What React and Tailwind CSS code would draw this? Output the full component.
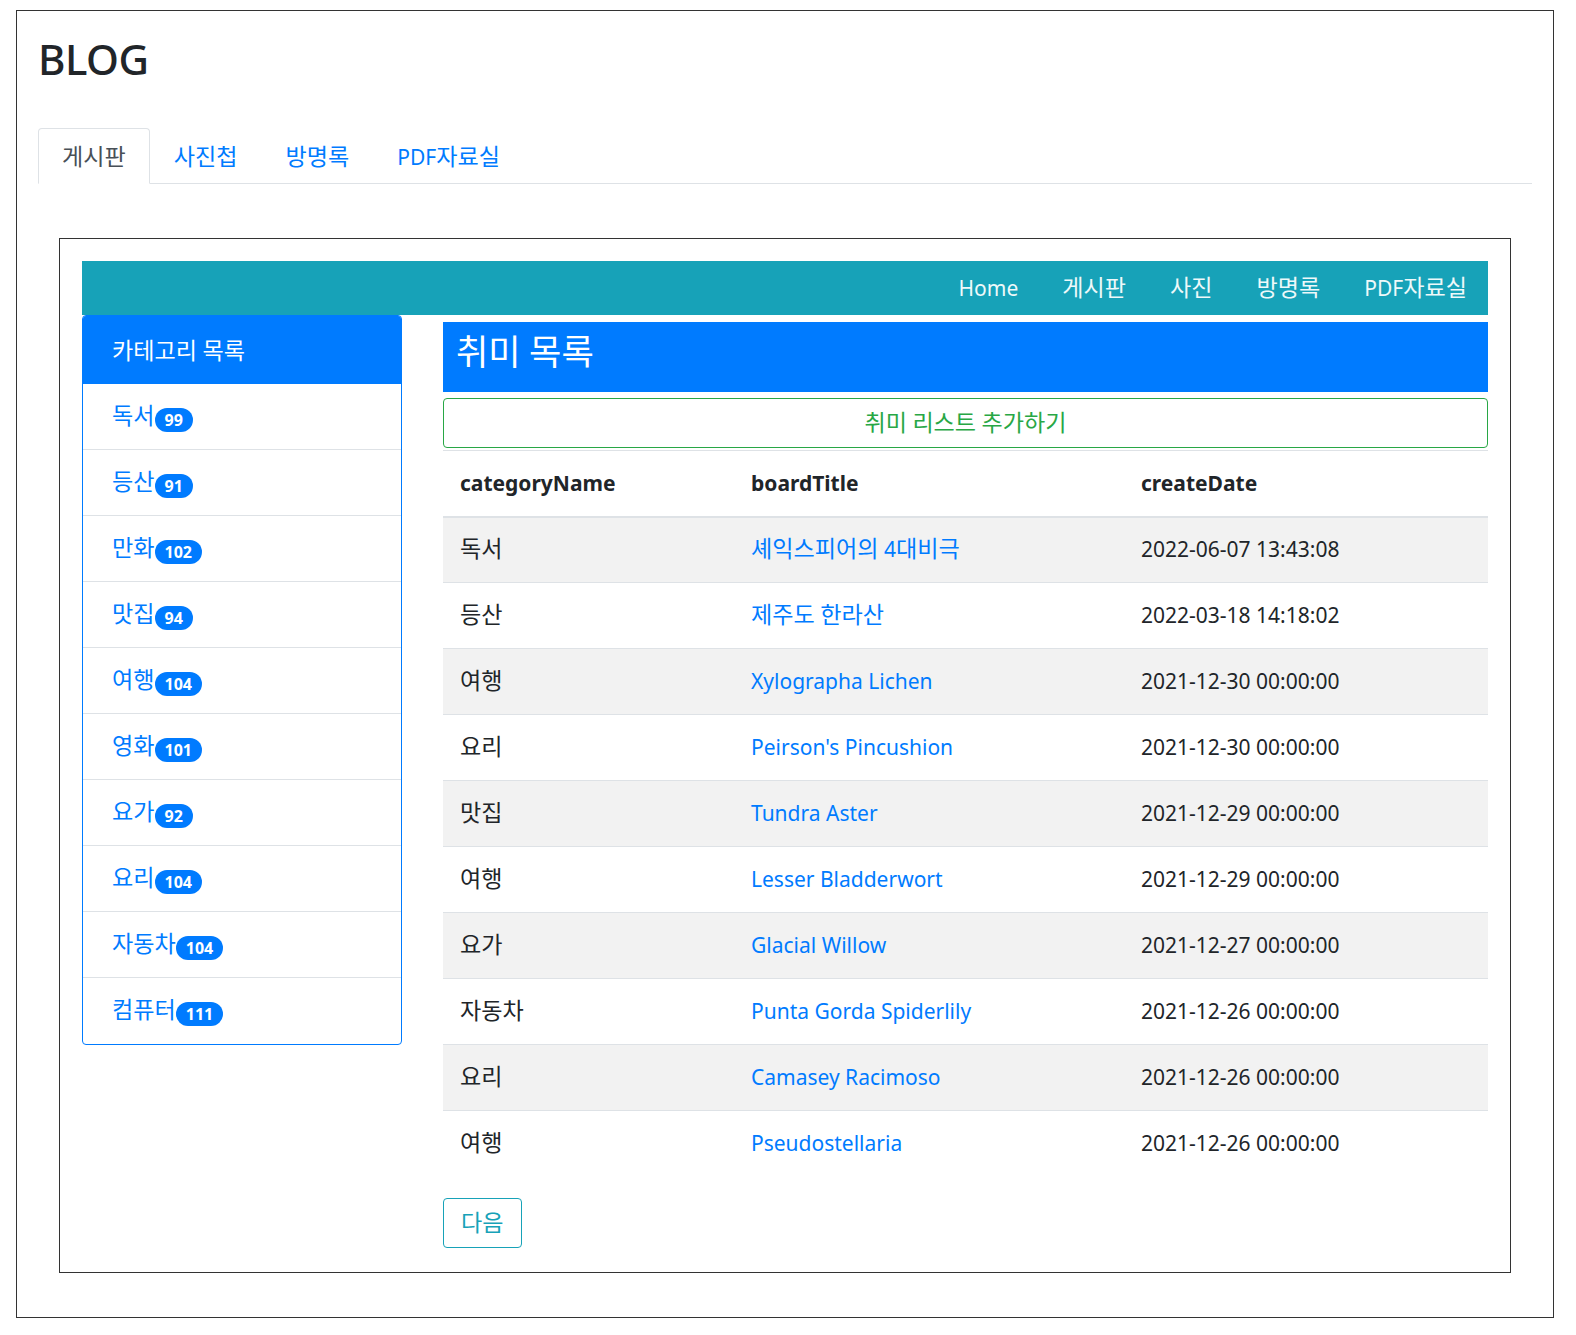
import React from "react";

const categories = [
    { name: "독서", count: 99 },
    { name: "등산", count: 91 },
    { name: "만화", count: 102 },
    { name: "맛집", count: 94 },
    { name: "여행", count: 104 },
    { name: "영화", count: 101 },
    { name: "요가", count: 92 },
    { name: "요리", count: 104 },
    { name: "자동차", count: 104 },
    { name: "컴퓨터", count: 111 },
];

const hobbies = [
    { categoryName: "독서", boardTitle: "셰익스피어의 4대비극", createDate: "2022-06-07 13:43:08" },
    { categoryName: "등산", boardTitle: "제주도 한라산", createDate: "2022-03-18 14:18:02" },
    { categoryName: "여행", boardTitle: "Xylographa Lichen", createDate: "2021-12-30 00:00:00" },
    { categoryName: "요리", boardTitle: "Peirson's Pincushion", createDate: "2021-12-30 00:00:00" },
    { categoryName: "맛집", boardTitle: "Tundra Aster", createDate: "2021-12-29 00:00:00" },
    { categoryName: "여행", boardTitle: "Lesser Bladderwort", createDate: "2021-12-29 00:00:00" },
    { categoryName: "요가", boardTitle: "Glacial Willow", createDate: "2021-12-27 00:00:00" },
    { categoryName: "자동차", boardTitle: "Punta Gorda Spiderlily", createDate: "2021-12-26 00:00:00" },
    { categoryName: "요리", boardTitle: "Camasey Racimoso", createDate: "2021-12-26 00:00:00" },
    { categoryName: "여행", boardTitle: "Pseudostellaria", createDate: "2021-12-26 00:00:00" },
];

const tabs = ["게시판", "사진첩", "방명록", "PDF자료실"];
const navLinks = ["Home", "게시판", "사진", "방명록", "PDF자료실"];

const K = ({ children }) => {
    const parts = String(children).split(/([\uAC00-\uD7A3]+)/);
    return parts.map((part, i) =>
        /[\uAC00-\uD7A3]/.test(part) ? (
            <span key={i} className="text-[1.1em] leading-none">{part}</span>
        ) : (
            part
        )
    );
};

const App = () => {
    return (
        <div
            className="min-h-[1335px] bg-white pt-[10px] pl-[16px] text-[#212529]"
            style={{ fontFamily: "'Noto Sans', 'Noto Sans CJK KR', sans-serif" }}
        >
            <div className="w-[1538px] border border-[#333] pt-[24px] px-[21px] pb-[44px]">
                <h1 className="text-[42px] font-medium leading-[48px] tracking-[-0.5px] text-[#212529]">BLOG</h1>

                {/* top tabs */}
                <ul className="mt-[45px] flex border-b border-[#dee2e6]">
                    {tabs.map((tab, i) => (
                        <li key={tab} className="-mb-px">
                            <a
                                className={`flex h-[56px] items-center pt-[3px] px-[23px] text-[21px] rounded-t-[4px] border ${i === 0
                                    ? "border-[#dee2e6] border-b-white bg-white text-[#495057]"
                                    : "border-transparent text-[#007bff]"
                                    }`}
                            >
                                <span><K>{tab}</K></span>
                            </a>
                        </li>
                    ))}
                </ul>

                <div className="mx-[21px] mt-[54px] border border-[#333] p-[22px] pb-[24px]">
                    {/* navbar */}
                    <nav className="flex h-[54px] items-center justify-end gap-[44px] bg-[#17a2b8] pt-[2px] pr-[21px] text-[21px] text-[#eef9fa]">
                        {navLinks.map((link) => (
                            <a key={link}><K>{link}</K></a>
                        ))}
                    </nav>

                    <div className="flex gap-[41px]">
                        {/* category sidebar */}
                        <div className="w-[320px] self-start overflow-hidden rounded-[4px] border border-[#007bff]">
                            <div className="flex h-[68px] items-center bg-[#007bff] pt-[3px] pl-[29px] text-[21px] text-white">
                                <span><K>카테고리 목록</K></span>
                            </div>
                            <div className="divide-y divide-[#dee2e6]">
                                {categories.map((c) => (
                                    <div key={c.name} className="flex h-[66px] items-center pl-[29px] text-[21px] text-[#007bff]">
                                        <span><K>{c.name}</K></span>
                                        <span className="mt-[6px] inline-block rounded-full bg-[#007bff] px-[10px] py-[4px] text-[16px] font-bold leading-none text-white">
                                            {c.count}
                                        </span>
                                    </div>
                                ))}
                            </div>
                        </div>

                        {/* hobby list */}
                        <div className="flex-1 pt-[7px]">
                            <h2 className="h-[70px] bg-[#007bff] pl-[13px] pt-[12px] text-[32px] leading-[38px] text-white">
                                <K>취미 목록</K>
                            </h2>
                            <button
                                type="button"
                                className="mt-[6px] h-[50px] w-full rounded-[4px] border border-[#28a745] pt-[2px] text-[21px] text-[#28a745]"
                            >
                                <K>취미 리스트 추가하기</K>
                            </button>

                            <table className="mt-[2px] w-full table-fixed border-collapse text-[21px]">
                                <colgroup>
                                    <col className="w-[291px]" />
                                    <col className="w-[390px]" />
                                    <col />
                                </colgroup>
                                <thead>
                                    <tr className="h-[66px] border-t border-b-2 border-[#dee2e6]">
                                        <th className="pl-[17px] text-left font-bold">categoryName</th>
                                        <th className="pl-[17px] text-left font-bold">boardTitle</th>
                                        <th className="pl-[17px] text-left font-bold">createDate</th>
                                    </tr>
                                </thead>
                                <tbody>
                                    {hobbies.map((h, i) => (
                                        <tr
                                            key={i}
                                            className={`h-[66px] border-t border-[#dee2e6] ${i % 2 === 0 ? "bg-[#f2f2f2]" : "bg-white"}`}
                                        >
                                            <td className="pl-[17px]"><K>{h.categoryName}</K></td>
                                            <td className="pl-[17px]">
                                                <a className="text-[#007bff]"><K>{h.boardTitle}</K></a>
                                            </td>
                                            <td className="pl-[17px]">{h.createDate}</td>
                                        </tr>
                                    ))}
                                </tbody>
                            </table>

                            <button
                                type="button"
                                className="mt-[21px] h-[50px] rounded-[4px] border border-[#17a2b8] px-[17px] pt-[2px] text-[21px] text-[#17a2b8]"
                            >
                                <K>다음</K>
                            </button>
                        </div>
                    </div>
                </div>
            </div>
        </div>
    );
};

export default App;
